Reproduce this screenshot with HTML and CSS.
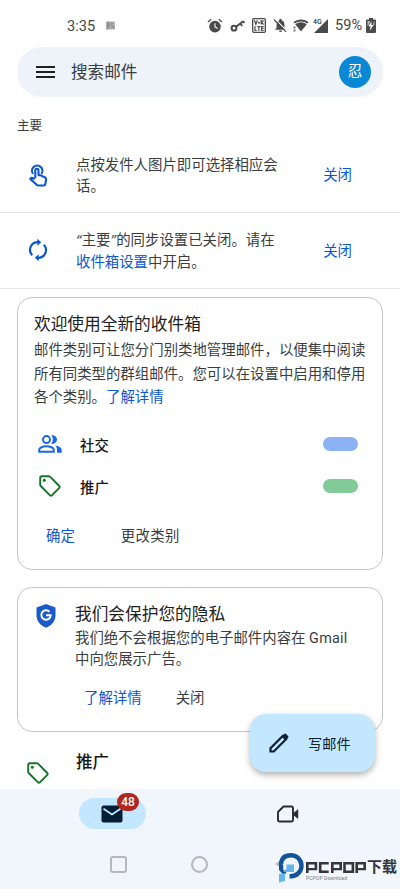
FILE: index.html
```html
<!DOCTYPE html>
<html lang="zh-CN">
<head>
<meta charset="utf-8">
<meta name="viewport" content="width=device-width, initial-scale=1">
<title>Gmail</title>
<link rel="stylesheet" href="styles.css">
</head>
<body>
<div class="phone">
  <header class="status">
    <span class="time">3:35</span>
    <svg class="app-note" viewBox="0 0 10 9"><path d="M0 0h10v9H0z" fill="#b4b6b4"/><path d="M1 2l3-1M1 5l6-4M1 8l7-6M5 8l4-4M7 5l2 3M2 1v7" stroke="#747774" stroke-width=".8"/></svg>
    <div class="status-icons">
      <svg width="16" height="16" viewBox="0 0 16 16"><circle cx="8" cy="8.6" r="5.8" fill="#4a4a4a"/><path d="M1 4l3.2-2.7M15 4l-3.2-2.7" stroke="#4a4a4a" stroke-width="1.4"/><path d="M8 5.2v3.8l2.600 1.5" fill="none" stroke="#fff" stroke-width="1.1"/></svg>
      <svg width="15" height="15" viewBox="0 0 15 15" fill="none" stroke="#4a4a4a"><circle cx="4" cy="10.2" r="2.4" stroke-width="2"/><path d="M6 8.8l7.2-5.6M10.2 5.4l2 2.6M13 3l1.2 2" stroke-width="1.9"/></svg>
      <svg width="14" height="15" viewBox="0 0 14 15"><rect x=".7" y=".7" width="12.6" height="13.6" rx="1" fill="#fff" stroke="#4a4a4a" stroke-width="1.3"/><path d="M2.4 2.3l1.5 4 1.5-4M9.2 2v4.5M9.2 4.5l2.4-2M9.5 4.5l2.2 2M3 8.2v4.3h1.8M5.3 8.6h3.2M6.9 8.6v4.3M11.7 8.6H9.6v3.9h2.1M9.6 10.5h2" fill="none" stroke="#4a4a4a" stroke-width="1.2"/><circle cx="7" cy="4.8" r="1" fill="#4a4a4a"/></svg>
      <svg class="bell" width="15" height="15" viewBox="0 0 15 15"><path d="M2 11.8h11l-1.6-2V6.4c0-2-1-3.3-2.8-3.8V1H6.4v1.6C4.6 3 3.6 4.4 3.6 6.4v3.4zM6 12.6h3a1.5 1.5 0 0 1-3 0z" fill="#4a4a4a"/><path d="M2 .8l12 12.4" stroke="#fff" stroke-width="1.2"/><path d="M1 1.5l12 12.3" stroke="#4a4a4a" stroke-width="1.2"/></svg>
      <svg width="16" height="15" viewBox="0 0 16 15"><path d="M.5 4.200C4.500.600 11.500.600 15.500 4.200l-1.100 1.300C10.900 2.700 5.100 2.700 1.600 5.500zM2.200 6.300c3.400-2.700 8.200-2.700 11.600 0L8 13.600z" fill="#4a4a4a"/><path d="M.5 8.500h2v2h-2zM.5 11.500h2v2h-2z" fill="#777"/></svg>
      <span class="cell"><small>4G</small><svg width="14" height="14" viewBox="0 0 14 14"><path d="M14 0v14H0z" fill="#4a4a4a"/></svg></span>
      <span class="percent">59%</span>
      <svg class="battery" width="10" height="15" viewBox="0 0 10 15"><path d="M3 0h4v1.500h2q1 0 1 1V14q0 1-1 1H1q-1 0-1-1V2.500q0-1 1-1h2z" fill="#4a4a4a"/><path d="M1.500 3h3L2 8H1.500zM8.500 3v4H6.800L8 3z" fill="#bbb"/><path d="M5.700 3.200L2.400 8.300h2.100l-.7 4.500 3.800-5.700H5.300z" fill="#fff"/></svg>
    </div>
  </header>

  <div class="search">
    <svg class="menu" viewBox="0 0 19 14"><path d="M0 2h19M0 7h19M0 12h19" stroke="#1c211e" stroke-width="2"/></svg>
    <span class="search-label">搜索邮件</span>
    <span class="avatar">忍</span>
  </div>

  <main class="content">
    <h2 class="section">主要</h2>

    <section class="tip tip-select">
      <svg class="tip-icon" viewBox="0 0 24 24"><path d="M7 10.800a5.200 5.200 0 1 1 8.400 0M9.300 15V7.400a1.600 1.600 0 0 1 3.200 0v4.700h1.500l4.800 2.200c1.200.6 1.500 1.200 1.300 2.200l-.8 4.600q-.2 1.400-1.600 1.400h-5.500q-.9 0-1.500-.7L4.200 15.900l1-1 4.100.8" fill="none" stroke="#0b57d0" stroke-width="2.100" stroke-linejoin="round"/></svg>
      <p>点按发件人图片即可选择相应会<br>话。</p>
      <a class="close">关闭</a>
    </section>
    <section class="tip tip-sync">
      <svg class="tip-icon" viewBox="0 0 24 24"><path d="M12.500 4.200H11A7.700 7.700 0 0 0 6.200 17.200M11.500 19.800H13A7.700 7.700 0 0 0 17.800 6.800" fill="none" stroke="#0b57d0" stroke-width="2.200"/><path d="M11.300.7L15.200 4.200l-3.900 3.500zM12.700 16.300l-3.900 3.500 3.900 3.500z" fill="#0b57d0"/></svg>
      <p><span class="quote">“</span>主要<span class="quote">”</span>的同步设置已关闭。请在<br><a>收件箱设置</a>中开启。</p>
      <a class="close">关闭</a>
    </section>

    <article class="card welcome">
      <h3>欢迎使用全新的收件箱</h3>
      <p>邮件类别可让您分门别类地管理邮件，以便集中阅读<br>所有同类型的群组邮件。您可以在设置中启用和停用<br>各个类别。<a>了解详情</a></p>
      <div class="category">
        <svg class="people" viewBox="0 0 24 18"><g fill="none" stroke="#1967e8" stroke-width="2"><circle cx="8.500" cy="4.600" r="3.500"/><path d="M1.200 16.700v-2c0-2.100 3.800-3.400 7.300-3.400s7.300 1.300 7.300 3.400v2z"/></g><path d="M13.300.3c3-.8 5.700 1.500 5.700 4.300s-2.700 5-5.700 4.200c2-2.300 2-6.200 0-8.500zM17 10.600c3.600.5 6.700 2 6.700 4.300v2.800H19v-3c0-1.700-.7-3-2-4.100z" fill="#1967e8"/></svg>
        <strong>社交</strong><i class="pill blue"></i>
      </div>
      <div class="category">
        <svg class="tag" viewBox="0 0 22 22"><path d="M1.200 2.700q0-1.500 1.500-1.500h7.200q.6 0 1.100.5l9.300 9.300q.9 1 0 1.900l-7.400 7.400q-1 .9-1.900 0L1.700 11q-.5-.5-.5-1.100z" fill="none" stroke="#137326" stroke-width="1.900"/><circle cx="5.300" cy="5.300" r="1.500" fill="#137326"/></svg>
        <strong>推广</strong><i class="pill green"></i>
      </div>
      <div class="actions"><a>确定</a><span>更改类别</span></div>
    </article>

    <article class="card privacy">
      <svg class="shield" viewBox="0 0 20 24"><path d="M10 0l9.500 3.600v7.500c0 5.900-4 11-9.500 12.600C4.500 22.100.5 17 .5 11.100V3.600z" fill="#1a5bcb"/><path d="M13.500 7.900a4.700 4.700 0 1 0 1.200 3.300H10" fill="none" stroke="#fff" stroke-width="2"/></svg>
      <div>
        <h3>我们会保护您的隐私</h3>
        <p>我们绝不会根据您的电子邮件内容在 <span class="latin">Gmail</span><br>中向您展示广告。</p>
        <div class="actions"><a>了解详情</a><span>关闭</span></div>
      </div>
    </article>

    <section class="promo">
      <svg class="tag" viewBox="0 0 22 22"><path d="M1.200 2.700q0-1.500 1.500-1.500h7.200q.6 0 1.100.5l9.300 9.300q.9 1 0 1.900l-7.400 7.400q-1 .9-1.900 0L1.700 11q-.5-.5-.5-1.100z" fill="none" stroke="#137326" stroke-width="1.900"/><circle cx="5.300" cy="5.300" r="1.500" fill="#137326"/></svg>
      <strong>推广</strong>
    </section>
  </main>

  <div class="compose">
    <svg viewBox="0 0 20 20"><path d="M1.500 18.500v-3.300L13.700 3l3.300 3.300L4.800 18.500z" fill="none" stroke="#10202e" stroke-width="2.200"/><path d="M12.600 3.500L15.100 1q1-1 2 0l1.900 1.900q1 1 0 2l-2.500 2.500z" fill="#10202e"/></svg>
    <span>写邮件</span>
  </div>

  <footer class="bottom">
    <nav class="tabs">
      <div class="tab-mail">
        <svg viewBox="0 0 22 18"><rect x=".5" y=".5" width="21" height="17" rx="2" fill="#041e33"/><path d="M2.500 3.700L11 9.400l8.500-5.700" fill="none" stroke="#c2e7ff" stroke-width="1.800"/></svg>
        <b class="badge">48</b>
      </div>
      <svg class="video" viewBox="0 0 22 18"><path d="M6.500 1.500h8q1.500 0 1.500 1.500v12q0 1.500-1.500 1.500h-12Q1 16.500 1 15V7z" fill="none" stroke="#292c2e" stroke-width="1.900" stroke-linejoin="round"/><path d="M16 8.500l5.200-4.500v10L16 9.700z" fill="#292c2e"/></svg>
    </nav>
    <div class="system">
      <i class="recent"></i><i class="home"></i>
      <div class="brand">
        <svg viewBox="0 0 29 31"><path d="M7 6L0 11 7 16z" fill="#bbbfc3"/><path d="M6 11.500Q6.500 2.200 16 2.200A10.500 10.500 0 0 1 16 23.200h-1.500" fill="none" stroke="#11549b" stroke-width="4.400"/><path d="M4 9.500l4.200 2.500v4.500l3.300 3.500-3 2L4 17z" fill="#11549b"/><path d="M11.500 11.500h7.500v7.500h-7.500zM4 21l6-.8V28l-6 1.500zM8 18.500l3.500-2.500v3z" fill="#62b5ed"/></svg>
        <div class="brand-copy">
          <div class="brand-name">
            <svg viewBox="0 0 60 12" preserveAspectRatio="none" role="img" aria-label="PCPOP"><g fill="none" stroke="#343638" stroke-width="2.600"><path d="M1.300 12V1.300h8.600v6.500H1.300M22.700 1.300h-8.500v9.400h8.500M26.300 12V1.300h8.400v6.500h-8.400M38.500 1.300h8.400v9.400h-8.400zM50.700 12V1.300h8v6.500h-8"/></g></svg>
            <b>下载</b>
          </div>
          <small>PCPOP Download</small>
        </div>
      </div>
    </div>
  </footer>
</div>
</body>
</html>
```
FILE: styles.css
```css
* { box-sizing: border-box; }
body {
  margin: 0;
  background: #fff;
  color: #3b3d3f;
  font-family: Roboto, "Noto Sans CJK SC", sans-serif;
  font-size: 14.42px;
}
h2, h3, p { margin: 0; font-weight: 400; }
svg { display: block; flex: none; overflow: visible; }
a { color: #0b57d0; }
i { display: block; }
.phone { width: 400px; height: 889px; position: relative; display: flex; flex-direction: column; overflow: hidden; }

.status { height: 47px; padding: 4px 24px 0 67px; display: flex; align-items: center; flex: none; }
.time { width: 39px; font-size: 14.6px; color: #454545; }
.app-note { width: 9px; height: 9px; }
.status-icons { margin-left: auto; display: flex; align-items: center; }
.status-icons > * { margin-right: 7px; }
.status-icons > .bell { margin-right: 5px; }
.status-icons > .battery { margin-right: 0; }
.status-icons > .percent { font-size: 14.5px; margin-right: 4px; color: #454545; }
.cell { display: flex; position: relative; margin-left: -2px; }
.cell small { position: absolute; left: -1px; top: 0; font-size: 7px; line-height: 7px; font-weight: 500; }

.search { flex: none; height: 50px; margin: 0 17px; padding: 0 12px 0 19px; border-radius: 25px; background: #eef3fa; display: flex; align-items: center; }
.menu { width: 19px; height: 14px; }
.search-label { margin: -2px 0 0 16px; font-size: 16.6px; }
.avatar { margin-left: auto; width: 32px; height: 32px; border-radius: 50%; background: #0989d5; color: #fff; font-size: 14.5px; line-height: 32px; text-align: center; }

.content { flex: 1; min-height: 0; overflow: hidden; }
.section { height: 40px; padding: 17px 17px 0; font-size: 12.5px; line-height: 24px; }
.tip { height: 76px; padding: 0 48px 0 26px; display: flex; align-items: center; border-bottom: 1px solid #e5e6e8; line-height: 21.3px; }
.tip p { margin-left: 26px; white-space: nowrap; }
.tip-select { padding-top: 3px; }
.tip-select .close { margin-top: -1px; }
.tip-select .tip-icon { margin-top: -2px; }
.tip-sync { padding-top: 2px; }
.tip-sync .tip-icon { margin-top: -3px; }
.quote { font-family: "Open Sans", Roboto, sans-serif; font-style: italic; letter-spacing: .7px; line-height: 1; }
.close { margin-left: auto; }
.tip-icon { width: 24px; height: 24px; }

.card { margin: 8px 17px 0; border: 1px solid #c4c6c8; border-radius: 15px; }
.card h3 { color: #1e2022; font-size: 16.7px; line-height: 25px; }
.welcome { height: 273px; padding: 14px 16px 0; }
.welcome p { line-height: 23.6px; margin-top: 2px; white-space: nowrap; }
.category { height: 42px; display: flex; align-items: center; padding: 0 8px 0 4px; }
.welcome p + .category { margin-top: 13px; }
.category strong { margin: 1px 0 0 18px; color: #171819; font-weight: 500; }
.people { width: 24px; height: 18px; }
.tag { width: 22px; height: 22px; }
.category .tag { margin: 0 1px; }
.pill { width: 35px; height: 14px; border-radius: 7px; margin-left: auto; }
.blue { background: #8bb2f5; }
.green { background: #82ca98; }
.actions { display: flex; line-height: 22px; }
.welcome .actions { margin-top: 19px; padding-left: 12px; gap: 46px; }
.welcome .actions span { letter-spacing: .3px; }

.privacy { height: 145px; margin-top: 17px; padding: 14px 16px 0 18px; display: flex; }
.privacy > div { margin-left: 19px; white-space: nowrap; }
.privacy p { line-height: 21.3px; margin-top: 1px; }
.latin { letter-spacing: .25px; }
.shield { width: 20px; height: 24px; margin-top: 2px; }
.privacy .actions { margin-top: 17px; padding-left: 9px; gap: 34px; }
.promo { display: flex; padding: 18px 27px; gap: 27px; }
.promo .tag { margin-top: 12px; }
.promo strong { color: #171819; font-size: 16.5px; line-height: 25px; font-weight: 500; }

.compose { position: absolute; left: 250px; top: 714px; width: 125px; height: 58px; border-radius: 16px; background: #c2e7ff; display: flex; align-items: center; padding-left: 19px; color: #10202e; box-shadow: 0 3px 6px rgba(0,0,0,.3); }
.compose svg { width: 20px; height: 20px; }
.compose span { margin-left: 19px; font-size: 14.2px; }

.bottom { height: 100px; background: #f1f5fc; flex: none; }
.tabs { height: 50px; padding: 9px 101px 0 79px; display: flex; justify-content: space-between; }
.tab-mail { position: relative; width: 67px; height: 31px; border-radius: 16px; background: #c2e7ff; padding: 7px 22px; }
.tab-mail svg { width: 22px; height: 18px; }
.badge { position: absolute; left: 38px; top: -5px; width: 22px; height: 18px; border-radius: 9px; background: #b3261e; color: #fff; text-align: center; font-size: 12px; line-height: 18px; font-weight: 500; }
.video { width: 22px; height: 18px; margin-top: 7px; }
.system { height: 50px; display: flex; align-items: flex-start; padding: 17px 2px 0 110px; }
.recent, .home { width: 17px; height: 17px; border: 2px solid #b5b7b9; border-radius: 3px; }
.home { border-radius: 50%; margin-left: 64px; }
.brand { margin: -3px 0 0 auto; display: flex; align-items: flex-start; }
.brand > svg { width: 29px; height: 31px; margin-left: -2px; }
.brand-copy { margin: 6px 0 0 2px; width: 92px; }
.brand-name { display: flex; align-items: center; height: 17px; color: #343638; }
.brand-name svg { width: 60px; height: 11px; }
.brand-name b { margin: 0 0 0 1px; font-size: 15px; line-height: 17px; }
.brand small { display: block; font-size: 5px; line-height: 6px; margin-top: -1px; letter-spacing: .1px; color: #777; white-space: nowrap; }
```
